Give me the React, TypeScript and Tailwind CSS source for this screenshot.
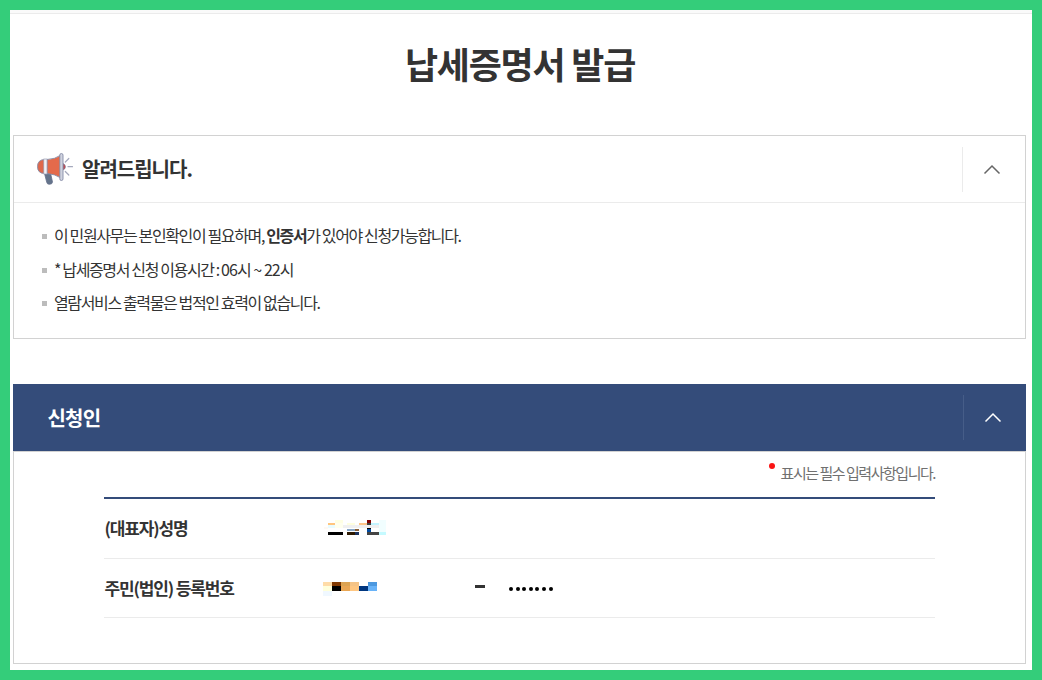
import type { ReactNode } from 'react'

type Block = [x: number, y: number, w: number, h: number, fill: string]

const notices: ReactNode[] = [
  <>이 민원사무는 본인확인이 필요하며, <b className="font-bold">인증서</b>가 있어야 신청가능합니다.</>,
  <>* 납세증명서 신청 이용시간 : <span className="tracking-[-0.95px]">06시 ~ 22시</span></>,
  <>열람서비스 출력물은 법적인 효력이 없습니다.</>,
]

// Masked values, drawn as coarse blocks (three units to a pixel)
const nameBlocks: Block[] = [
  [54, 39, 21, 6, '#ffc57d'],
  [75, 30, 24, 9, '#ffffe3'],
  [75, 39, 24, 15, '#ffffee'],
  [54, 45, 21, 9, '#e9fcff'],
  [42, 51, 12, 6, '#fff9f3'],
  [99, 45, 48, 9, '#f0f0f0'],
  [111, 39, 24, 6, '#ffffdf'],
  [54, 66, 45, 9, '#000000'],
  [111, 57, 24, 6, '#86a5c5'],
  [135, 57, 12, 6, '#8b6037'],
  [111, 66, 24, 9, '#2d1800'],
  [135, 66, 12, 9, '#1b315c'],
  [147, 39, 24, 6, '#ffc58b'],
  [147, 45, 60, 9, '#f0eff0'],
  [171, 30, 12, 9, '#800000'],
  [171, 39, 12, 6, '#444444'],
  [183, 39, 24, 6, '#c4f3ff'],
  [171, 54, 12, 3, '#000000'],
  [171, 57, 12, 9, '#004aa0'],
  [171, 66, 36, 9, '#444444'],
  [207, 30, 21, 36, '#f1feff'],
  [207, 66, 21, 9, '#c5faff'],
]

const numberBlocks: Block[] = [
  [39, 36, 27, 12, '#ffdca8'],
  [39, 48, 27, 15, '#ffffdc'],
  [39, 63, 27, 15, '#f0f8ff'],
  [66, 36, 27, 12, '#823900'],
  [66, 48, 27, 15, '#000000'],
  [93, 36, 27, 12, '#dca352'],
  [93, 48, 27, 15, '#e9a653'],
  [120, 36, 27, 12, '#f5c487'],
  [120, 48, 27, 15, '#ffc782'],
  [147, 48, 27, 15, '#00367f'],
  [174, 36, 27, 12, '#4c98df'],
  [174, 48, 27, 15, '#69b3f8'],
]

function Mosaic({ blocks }: { blocks: Block[] }) {
  return (
    <svg width="90" height="40" viewBox="0 0 270 120" shapeRendering="crispEdges">
      {blocks.map(([x, y, w, h, fill], i) => (
        <rect key={i} x={x} y={y} width={w} height={h} fill={fill} />
      ))}
    </svg>
  )
}

function Megaphone() {
  return (
    <svg width="38" height="34" viewBox="0 0 38 34" fill="none">
      <path d="M8.5 21.5 L14.5 21 L16.5 30 Q16.3 32.3 13.5 32.3 Q11.2 32.5 10.8 30.5Z" fill="#64748b" stroke="#66708a" strokeWidth=".8" />
      <path d="M9 7.5 Q1.5 7.5 1.5 14.7 Q1.5 21.5 9 21.5Z" fill="#df684b" stroke="#858ba6" strokeWidth=".9" />
      <path d="M11 7.5 Q19 7.3 25 3 V26 Q19 22 11 21.5Z" fill="#e46a4b" stroke="#858ba6" strokeWidth=".9" />
      <rect x="7.8" y="7" width="3.2" height="15" fill="#f2f2f6" stroke="#9a9fb5" strokeWidth=".7" />
      <path d="M27 11.5 Q29.5 12.5 29.5 14.7 Q29.5 17 27 18Z" fill="#c7494c" stroke="#747b98" strokeWidth=".6" />
      <rect x="23.8" y="1.5" width="3.2" height="27" rx="1.6" fill="#d0d3df" stroke="#858ba6" strokeWidth=".9" />
      <path d="M29.3 10 L32.8 6.5 M32 14.7 H36.5 M29.3 19.5 L32.8 23" stroke="#a5a9bd" strokeWidth="1.2" strokeLinecap="round" />
    </svg>
  )
}

function Chevron({ color }: { color: string }) {
  return (
    <svg width="18" height="12" viewBox="0 0 18 12" fill="none">
      <path d="M1.5 9.5 L9 2 L16.5 9.5" stroke={color} strokeWidth="1.5" />
    </svg>
  )
}

export default function App() {
  return (
    <div className="h-[680px] w-[1042px] overflow-hidden border-[10px] border-[#34cd7a] bg-white font-['Noto_Sans_CJK_KR',sans-serif] text-[#333]">
      <div className="h-1 border-b border-[#ebebeb] bg-[#fafafa]" />
      <main className="ml-[3px] w-[1013px]">
        <h1 className="flex h-[121px] items-start justify-center pt-[21px] pl-px text-[36px] leading-[56px] font-bold tracking-[-1.25px] whitespace-nowrap">
          납세증명서 발급
        </h1>

        <section className="h-[204px] border border-[#d2d2d2]">
          <header className="flex h-[67px] items-center border-b border-[#ebebeb] pl-[22px]">
            <Megaphone />
            <h2 className="ml-2 text-[20px] font-bold tracking-[-1px]">알려드립니다.</h2>
            <button className="ml-auto flex h-[45px] w-[63px] items-center justify-center border-l border-[#ebebeb] pt-0.5 pr-[5px]">
              <Chevron color="#666" />
            </button>
          </header>
          <ul className="flex flex-col pt-[17px] pl-7 text-[16px] tracking-[-1.37px]">
            {notices.map((notice, i) => (
              <li key={i} className="flex h-[33.5px] items-center whitespace-pre">
                <span className="mr-[7px] h-[5px] w-[5px] bg-[#bcbcbc]" />
                <span className="pb-[3px]">{notice}</span>
              </li>
            ))}
          </ul>
        </section>

        <section className="mt-[45px] h-[280px]">
          <header className="flex h-[67px] items-center bg-[#344c7a] pl-[34.5px] text-white">
            <h2 className="text-[20px] font-bold tracking-[-0.8px]">신청인</h2>
            <button className="ml-auto flex h-[45px] w-[63px] items-center justify-center border-l border-[#465d88] pr-1">
              <Chevron color="#fff" />
            </button>
          </header>
          <div className="h-[213px] border border-[#d2d2d2] px-[90px]">
            <p className="flex h-[45px] items-start justify-end pt-[9px] text-[15px] leading-[24px] tracking-[-1.47px] text-[#707070]">
              <span className="mt-[2px] mr-[6px] h-1.5 w-1.5 rounded-full bg-[#fa1414]" />
              표시는 필수 입력사항입니다.
            </p>
            <dl className="w-[831px] border-t-2 border-[#344c7a] text-[17px] tracking-[-1.15px]">
              <div className="flex h-[60px] items-center border-b border-[#ebebeb]">
                <dt className="w-[206px] pb-0.5 pl-[0.5px] font-bold">(대표자)성명</dt>
                <dd className="pt-[3px]"><Mosaic blocks={nameBlocks} /></dd>
              </div>
              <div className="flex h-[59px] items-center border-b border-[#ebebeb]">
                <dt className="w-[206px] pb-px pl-[0.5px] font-bold">주민(법인) 등록번호</dt>
                <dd className="flex items-center">
                  <div className="pt-1"><Mosaic blocks={numberBlocks} /></div>
                  <span className="mb-[3px] ml-[75px] h-[3px] w-[10px] bg-[#333]" />
                  <span className="ml-[24px] flex gap-[2.6px] pt-px">
                    {Array.from({ length: 7 }, (_, i) => (
                      <span key={i} className="h-1 w-1 rounded-full bg-black" />
                    ))}
                  </span>
                </dd>
              </div>
            </dl>
          </div>
        </section>
      </main>
    </div>
  )
}
